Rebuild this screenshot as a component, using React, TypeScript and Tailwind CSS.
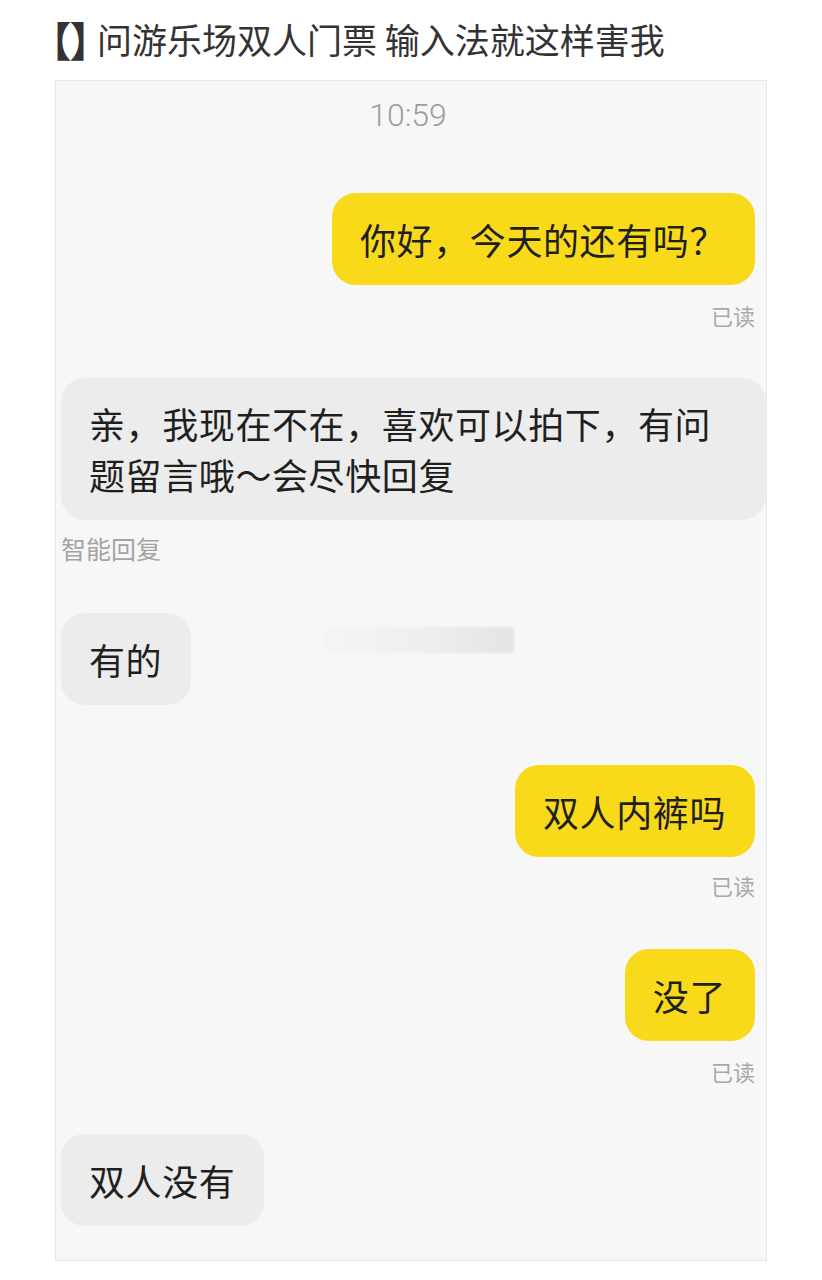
import React from 'react';

const cjk = "font-['Noto_Sans_CJK_SC','Noto_Sans',sans-serif]";

const Mine = ({ text, className = '' }: { text: string; className?: string }) => {
  return <div className={`flex justify-end ${className}`}>
      <div className={`bg-[#f8da1a] text-[#1f1f1f] text-[36px] tracking-[0.6px] leading-[51px] pt-[21px] pb-[20px] pl-[28px] pr-[29px] rounded-[24px] ${cjk}`}>
        {text}
      </div>
    </div>;
};

const Theirs = ({ text, className = '' }: { text: string; className?: string }) => {
  return <div className={`flex ${className}`}>
      <div className={`bg-[#ececec] text-[#1f1f1f] text-[36px] tracking-[0.6px] leading-[51px] pt-[21px] pb-[20px] pl-[28px] pr-[29px] rounded-[24px] ${cjk}`}>
        {text}
      </div>
    </div>;
};

const ReadMark = ({ className = '' }: { className?: string }) => <div className={`text-right text-[22px] leading-[28px] text-[#a9a9a9] ${cjk} ${className}`}>已读</div>;

const App = () => {
  return <div className="w-[822px] min-h-[1280px] bg-white px-[55px] pt-[15px]">
      <h1 className={`flex items-start text-[35px] leading-[48px] text-[#333333] font-normal ${cjk}`}>
        <span className="-ml-[5px] text-[41px] leading-[48px] font-bold [font-feature-settings:'palt']">【】</span>
        <span className="ml-[6px]">问游乐场双人门票 输入法就这样害我</span>
      </h1>
      {/* chat screenshot */}
      <div className="mt-[17px] border border-[#e8e8e8] bg-[#f7f7f7] pt-[16px] pb-[34px] pl-[5px] pr-[11px]">
        <div className="text-center text-[32px] leading-[36px] text-[#9d9d9d] font-light font-['Roboto','Liberation_Sans',Arial,sans-serif]">
          10:59
        </div>
        <Mine text="你好，今天的还有吗？" className="mt-[60px]" />
        <ReadMark className="mt-[16px]" />
        <div className="mt-[49px]">
          <div className={`w-[705px] bg-[#ececec] text-[#1f1f1f] text-[36px] tracking-[0.6px] leading-[51px] pt-[20px] pb-[20px] pl-[28px] pr-[50px] rounded-[24px] ${cjk}`}>
            亲，我现在不在，喜欢可以拍下，有问题留言哦～会尽快回复
          </div>
        </div>
        <div className={`mt-[13px] text-[25px] leading-[30px] text-[#a3a3a3] ${cjk}`}>智能回复</div>
        <div className="mt-[50px] flex items-start">
          <Theirs text="有的" />
          <div className="ml-[133px] mt-[14px] w-[190px] h-[26px] rounded-sm bg-gradient-to-r from-[#f5f5f5] via-[#efefef] to-[#e4e4e4] blur-[1px]" />
        </div>
        <Mine text="双人内裤吗" className="mt-[60px]" />
        <ReadMark className="mt-[14px]" />
        <Mine text="没了" className="mt-[50px]" />
        <ReadMark className="mt-[16px]" />
        <Theirs text="双人没有" className="mt-[49px]" />
      </div>
    </div>;
};

export default App;
